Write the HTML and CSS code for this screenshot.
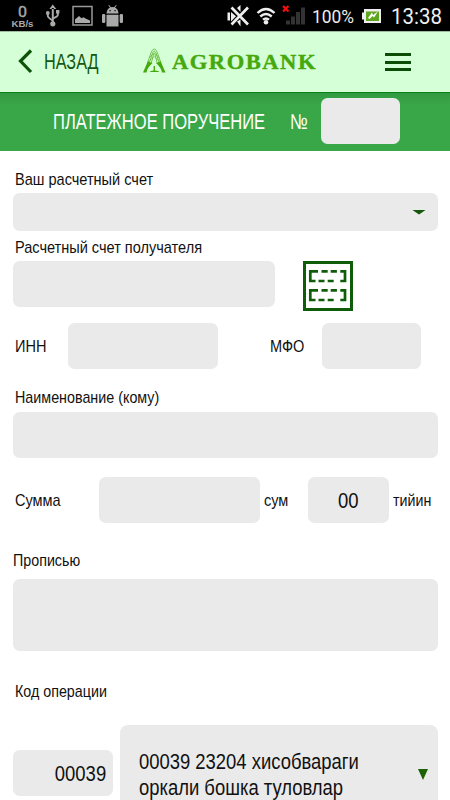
FILE: index.html
```html
<!DOCTYPE html>
<html lang="ru">
<head>
<meta charset="utf-8">
<title>Платежное поручение</title>
<link rel="stylesheet" href="styles.css">
</head>
<body>
<div class="status">
  <svg width="450" height="31" viewBox="0 0 450 31">
    <g fill="#aaa">
      <text class="rb" x="18" y="16.500" font-size="15.500" stroke="#aaa" stroke-width=".4" textLength="9" lengthAdjust="spacingAndGlyphs">0</text>
      <text class="sans" x="11.500" y="26.700" font-size="9" font-weight="bold" textLength="22" lengthAdjust="spacingAndGlyphs">KB/s</text>
      <path d="M52.800 4.500l-3.500 4.500h7zM51.800 8h2v16h-2z"/>
      <circle cx="52.800" cy="23.800" r="2.600"/>
      <path d="M47.800 13v3q0 1.500 5 4.500M57.800 12v3q0 1.500-5 3.500" fill="none" stroke="#aaa" stroke-width="1.900"/>
      <circle cx="47.800" cy="13" r="1.900"/><path d="M56 10h3.400v3.500H56z"/>
      <path d="M73 6.500h19v18.500H73z" fill="none" stroke="#999" stroke-width="1.500"/>
      <path d="M75 23v-3.500l4-3.500 2.500 2.300 2-1 2 1.200 4.500 2v2.500z"/>
      <path d="M106.500 13.500q.3-4.500 3.500-6l-1.700-2 .7-.5 2 2.200q1.500-.5 3 0l2-2.200.7.500-1.700 2q3.200 1.500 3.500 6zM106.500 14.700h12v11.800h-12z"/>
      <rect x="102" y="14" width="3.300" height="9" rx="1.300"/><rect x="119.700" y="14" width="3.300" height="9" rx="1.300"/>
      <path d="M109.500 10h1.200v1.200h-1.200zM114.500 10h1.200v1.200h-1.200z" fill="#000"/>
    </g>
    <g fill="#eee">
      <path d="M227.500 12.500h2.500v8h-2.500zM231 12l5 4.300-5 5.200zM237 8l3.500-3v7zM237 21.500l3.500-2v7z"/>
      <path d="M231.500 7.500l16.500 17M248 7.500l-16.500 17" stroke="#eee" stroke-width="2.700"/>
      <path d="M257.500 13q8.500-8 17 0M260.300 16.500q5.700-5 11.400 0M263 19.700q3-2.500 6 0" fill="none" stroke="#eee" stroke-width="2.400"/>
      <circle cx="266" cy="22.300" r="2.300"/>
      <path d="M286 20.500h4v4h-4zM291 16.500h4v8h-4zM296 12h4v12.500h-4zM301 7.500h4v17h-4z" fill="#333"/>
      <path d="M283 6l5.500 5.500M288.500 6L283 11.500" stroke="#f01010" stroke-width="2.300"/>
      <text class="rb" x="312" y="23" font-size="18.500" textLength="42" lengthAdjust="spacingAndGlyphs">100%</text>
      <path d="M364 9H381v14h-17v-3.500h-2v-7h2z"/>
      <path d="M366 11.500H379v9.500h-13z" fill="#5fa51e"/>
      <path d="M368 18l4-5.500 1 2.500 5-3.500-4 6-1.500-1.500-3 3z" fill="#fff"/>
      <text class="rb" x="391" y="24" font-size="21.500" textLength="51" lengthAdjust="spacingAndGlyphs">13:38</text>
    </g>
  </svg>
</div>
<header class="header">
  <svg class="back-icon" width="16" height="26" viewBox="0 0 16 26"><path d="M14 1.500L3.500 12 14 23" fill="none" stroke="#0d5208" stroke-width="3.200"/></svg>
  <span class="back">НАЗАД</span>
  <svg class="logo" width="174" height="28" viewBox="0 0 174 28">
    <g fill="none" stroke="#5cb52c" stroke-width=".8">
      <path d="M5.500 16L9.300 5q2.900-6 5.800 0l3.900 11M7.300 16l3.200-10q1.700-3.500 3.500 0l3.300 10M9.300 16l2.200-8.500q.7-2 1.500 0l2.200 8.500"/>
      <path d="M7 11l5.200-5 5.300 5M6 15l6.200-5.500 6.300 5.500" stroke-width=".6"/>
    </g>
    <path d="M5.800 14.500L1 25.500h3.500q.5-4.500 6-9.500zM18.700 14.500l4.800 11H20q-.5-4.500-6-9.500zM11.600 19h1.400v4.500q3.500.2 4.500 1.500H7.500q.8-1.300 4.100-1.500z" fill="#45a80c"/>
    <text x="30" y="22" textLength="145" lengthAdjust="spacingAndGlyphs">AGROBANK</text>
  </svg>
  <span class="menu"><i></i><i></i><i></i></span>
</header>
<div class="title">
  <span class="title-text">ПЛАТЕЖНОЕ ПОРУЧЕНИЕ</span>
  <span class="number">№</span>
  <span class="field number-field"></span>
</div>
<main class="form">
  <div class="label first"><span class="t-own">Ваш расчетный счет</span></div>
  <div class="field select"><svg width="14" height="5" viewBox="0 0 14 5"><path d="M.5 0h13L7 4.500z" fill="#13580b"/></svg></div>
  <div class="label second"><span class="t-recipient">Расчетный счет получателя</span></div>
  <div class="row recipient">
    <div class="field"></div>
    <svg width="50" height="50" viewBox="0 0 50 50" fill="none" stroke="#0f5d08">
      <path d="M1.500 1.500h47v47h-47z" stroke-width="3"/>
      <g id="slot" stroke-width="2.700"><path d="M15 10.300H7.300v9.700h5.200M37.300 10.300h4.700v9.700h-4.700M18.500 10.300h6.200M27.700 10.300h6.200M15.500 20h6M24.700 20h6"/></g>
      <use href="#slot" y="19"/>
    </svg>
  </div>
  <div class="row codes">
    <span class="t-inn">ИНН</span><div class="field inn"></div>
    <span class="t-mfo">МФО</span><div class="field mfo"></div>
  </div>
  <div class="label third"><span class="t-name">Наименование (кому)</span></div>
  <div class="field name"></div>
  <div class="row sum">
    <span class="t-sum">Сумма</span><div class="field amount"></div>
    <span class="t-som">сум</span><div class="field cents"><span>00</span></div>
    <span class="t-tiyin">тийин</span>
  </div>
  <div class="label fourth"><span class="t-words">Прописью</span></div>
  <div class="field words"></div>
  <div class="label fifth"><span class="t-code">Код операции</span></div>
  <div class="row operation">
    <div class="field code"><span>00039</span></div>
    <div class="field purpose">
      <div class="purpose-text"><span class="l1">00039 23204 хисобвараги</span><span class="l2">оркали бошка туловлар</span></div>
      <svg width="10" height="11" viewBox="0 0 10 11"><path d="M0 0h10L5 11z" fill="#1c6204"/></svg>
    </div>
  </div>
</main>
</body>
</html>
```
FILE: styles.css
```css
* { box-sizing: border-box; }
body {
  margin: 0;
  width: 450px;
  height: 800px;
  overflow: hidden;
  background: #fff;
  color: #111;
  font: 17px/20px "Liberation Sans", Arial, sans-serif;
}
svg { display: block; flex: none; }
span { white-space: nowrap; flex: none; }
.rb { font-family: Roboto, sans-serif; }
.sans { font-family: "Liberation Sans", sans-serif; }
.status { height: 31px; background: #000; }
.header {
  display: flex;
  align-items: center;
  height: 61px;
  padding: 0 39px 0 17px;
  background: #d5ffd6;
  border-top: 1px solid #9dbb9d;
}
.back {
  width: 56px;
  margin-left: 11px;
  font-size: 21.5px;
  color: #155711;
  transform: scaleX(.755);
  transform-origin: left;
}
.logo { margin: -3px 0 0 42px; }
.logo text {
  font: bold 22px "Liberation Serif", serif;
  letter-spacing: 1.5px;
  fill: #45a80c;
  stroke: #45a80c;
  stroke-width: .4px;
}
.menu { display: grid; gap: 4.500px; width: 26px; margin-left: auto; }
.menu i { height: 3px; background: #0b4d05; }
.title {
  display: flex;
  align-items: center;
  height: 59px;
  background: linear-gradient(#319a40, #39a748 12px);
  border-top: 1px solid #078118;
  color: #fff;
  font-size: 21.5px;
}
.title-text { width: 237px; margin-left: 53px; transform: scaleX(.769); transform-origin: left; }
.number { width: 30.500px; transform: scaleX(.77); transform-origin: left; }
.field { flex: none; border-radius: 6.500px; background: #eaeaea; }
.number-field { width: 79px; height: 46px; margin-top: -2px; }
.form { padding: 0 12.500px; }
.label { display: flex; align-items: center; padding-left: 2.500px; }
.label span, .row > span { transform: scaleX(.855); transform-origin: left; }
.label .t-name { transform: scaleX(.842); }
.label .t-words, .label .t-code { transform: scaleX(.84); }
.first { height: 42.400px; padding-top: 15px; }
.select {
  display: flex;
  align-items: center;
  justify-content: flex-end;
  height: 37.500px;
  padding-right: 12px;
}
.second { height: 30.600px; padding-top: 3px; }
.row { display: flex; }
.recipient { justify-content: space-between; height: 62px; padding-right: 84.500px; }
.recipient .field { width: 262.500px; height: 45.500px; }
.codes { align-items: center; height: 46px; padding-left: 2.500px; }
.codes > span { margin-top: 2px; }
.t-inn { width: 53px; }
.inn { width: 149.500px; height: 46px; }
.t-mfo { width: 52px; margin-left: 52.500px; }
.mfo { width: 98.500px; height: 46px; }
.third { height: 42.500px; padding-top: 14px; }
.name { height: 46px; }
.sum { align-items: center; height: 46px; margin-top: 19px; padding-left: 2.500px; }
.sum > span { margin-top: 2px; }
.t-sum { width: 83.500px; }
.amount { width: 161.500px; height: 46px; }
.t-som { width: 44px; margin-left: 4px; }
.cents { display: grid; place-items: center; width: 80.500px; height: 46px; padding-top: 3px; }
.cents span, .code span { font-size: 22px; transform: scaleX(.84); }
.row > .t-tiyin { margin-left: 4px; transform: scaleX(.84); }
.fourth { height: 56.500px; padding: 20px 0 0; }
.words { height: 72px; }
.fifth { height: 73.500px; }
.fifth span { margin-top: 8px; }
.operation { gap: 7px; align-items: flex-start; }
.code {
  display: flex;
  align-items: center;
  justify-content: flex-end;
  width: 100px;
  height: 46px;
  margin-top: 25px;
  padding: 2px 6px 0 0;
}
.code span { transform-origin: right; }
.purpose {
  display: flex;
  align-items: center;
  justify-content: space-between;
  width: 318px;
  height: 96px;
  padding: 4px 10px 0 19px;
  border-radius: 8px;
}
.purpose-text { display: grid; width: 222px; font-size: 21.5px; line-height: 26px; }
.purpose-text span { transform: scaleX(.857); transform-origin: left; }
```
